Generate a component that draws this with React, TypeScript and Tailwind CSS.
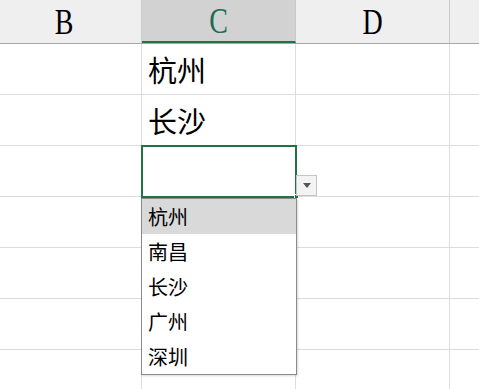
import { ReactNode } from 'react'

const CJK = "font-['Microsoft_YaHei','Noto_Sans_CJK_SC',sans-serif]"
const ROWS = 7

const options = ['杭州', '南昌', '长沙', '广州', '深圳']

function HeaderCell({ label, width, active, extra = '' }: { label: string; width: string; active?: boolean; extra?: string }) {
  return (
    <div
      className={`${width} ${extra} flex h-full shrink-0 items-center justify-center border-r border-[#c9c9c9] ${
        active ? 'bg-[#d2d2d2] border-b-2 border-b-[#217346]' : ''
      }`}
    >
      <span
        className={`inline-block scale-y-[1.3] font-['Liberation_Serif',serif] text-[28px] leading-none ${
          active ? 'text-[#1d6b55]' : 'text-black'
        }`}
      >
        {label}
      </span>
    </div>
  )
}

function Cell({ width, children }: { width: string; children?: ReactNode }) {
  return (
    <div className={`${width} flex h-full shrink-0 items-center border-r border-[#dcdcdc] pl-[6px]`}>
      {children}
    </div>
  )
}

export default function App() {
  const values = ['杭州', '长沙']

  return (
    <main className="relative h-[389px] w-[479px] overflow-hidden bg-white">
      <div className="flex h-[44px] border-b border-[#a8a8a8] bg-[#efefef]">
        <HeaderCell label="B" width="w-[142px]" extra="pr-[13px]" />
        <HeaderCell label="C" width="w-[154px]" active />
        <HeaderCell label="D" width="w-[154px]" />
        <div className="flex-1" />
      </div>

      {Array.from({ length: ROWS }).map((_, i) => (
        <div key={i} className="flex h-[51px] border-b border-[#dcdcdc]">
          <Cell width="w-[142px]" />
          <Cell width="w-[154px]">
            {values[i] && <span className={`${CJK} text-[29px] leading-none text-black`}>{values[i]}</span>}
          </Cell>
          <Cell width="w-[154px]" />
          <div className="flex-1" />
        </div>
      ))}

      {/* active cell */}
      <div className="absolute left-[141px] top-[145px] h-[53px] w-[156px] border-2 border-[#217346]" />
      <div className="absolute left-[294px] top-[194px] h-[5px] w-[5px] border border-white bg-[#217346]" />

      {/* dropdown button */}
      <div className="absolute left-[296px] top-[175px] flex h-[21px] w-[21px] items-center justify-center border border-[#c4c4c4] bg-[#f3f3f3]">
        <svg width="8" height="5" viewBox="0 0 8 5">
          <path d="M0 0h8L4 5z" fill="#555" />
        </svg>
      </div>

      {/* validation list */}
      <ul className="absolute left-[141px] top-[198px] w-[156px] border border-[#8a8a8a] bg-white shadow-[1px_1px_2px_rgba(0,0,0,0.15)]">
        {options.map((opt, i) => (
          <li
            key={opt}
            className={`${CJK} flex h-[35px] items-center pl-[6px] text-[20px] leading-none text-black ${
              i === 0 ? 'bg-[#d9d9d9]' : ''
            }`}
          >
            {opt}
          </li>
        ))}
      </ul>
    </main>
  )
}
